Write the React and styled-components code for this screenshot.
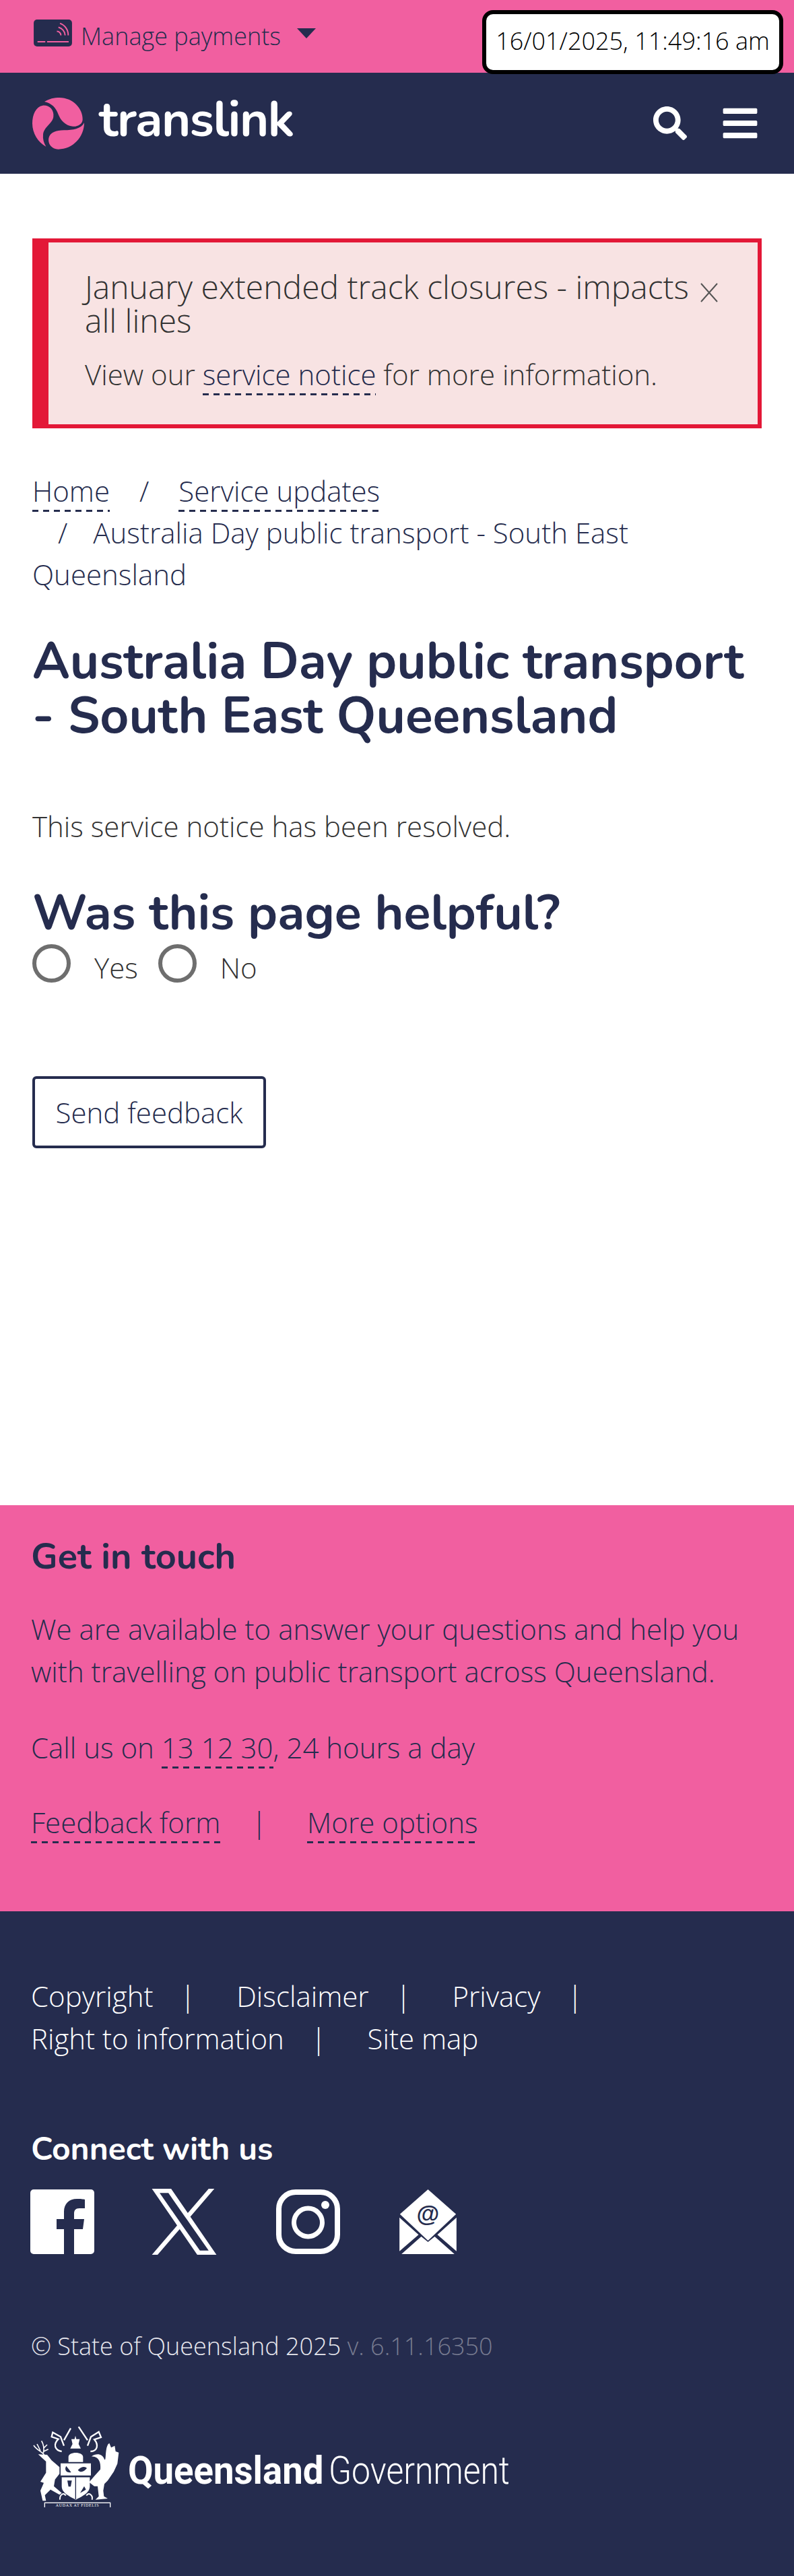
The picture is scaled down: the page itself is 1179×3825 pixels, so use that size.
import React from "react";
import styled, { createGlobalStyle } from "styled-components";
import { FaSearch, FaBars } from "react-icons/fa";

const NAVY = "#252c4e";
const PINK = "#f15fa0";

const Global = createGlobalStyle`
    body {
        margin: 0;
        background: #fff;
        font-family: "Open Sans", "Liberation Sans", sans-serif;
        font-weight: 300;
        color: ${NAVY};
    }
    * { box-sizing: border-box; }
`;

const Page = styled.div`
    width: 1179px;
    height: 3825px;
    display: flex;
    flex-direction: column;
    overflow: hidden;
`;

// top strip
const TopBar = styled.div`
    position: relative;
    height: 108px;
    background: ${PINK};
    padding: 29px 0 0 50px;
    display: flex;
    align-items: flex-start;
`;
const PayLabel = styled.span`
    font-size: 36px;
    line-height: 46px;
    margin: 2px 0 0 13px;
`;
const Caret = styled.span`
    width: 0;
    height: 0;
    margin: 13px 0 0 24px;
    border-left: 14px solid transparent;
    border-right: 14px solid transparent;
    border-top: 15px solid ${NAVY};
`;
const Clock = styled.div`
    position: absolute;
    top: 15px;
    right: 16px;
    width: 447px;
    height: 95px;
    background: #fff;
    border: 6px solid #000;
    border-radius: 16px;
    font-size: 36px;
    line-height: 80px;
    color: #000;
    text-align: center;
    z-index: 2;
`;

// nav
const Nav = styled.div`
    height: 150px;
    background: ${NAVY};
    display: flex;
    align-items: center;
    padding: 0 51px 0 48px;
    color: #fff;
`;
const Brand = styled.a`
    font-family: "Nunito", "Noto Sans", sans-serif;
    font-weight: 700;
    font-size: 74px;
    line-height: 80px;
    letter-spacing: -1.5px;
    margin: -10px 0 0 22px;
    color: #fff;
`;
const NavIcons = styled.div`
    margin-left: auto;
    display: flex;
    align-items: center;
    gap: 50px;
    font-size: 50px;
`;

// main
const Main = styled.main`
    height: 1977px;
    padding: 96px 48px 0;
`;
const Alert = styled.div`
    width: 1083px;
    height: 282px;
    background: #f8e3e3;
    border: 6px solid #e31837;
    border-left-width: 24px;
    padding: 41px 0 0 54px;
    color: #333;
`;
const AlertHead = styled.div`
    display: flex;
    align-items: flex-start;
`;
const AlertTitle = styled.h3`
    margin: 0;
    width: 914px;
    font-weight: 300;
    font-size: 48px;
    line-height: 50px;
`;
const Close = styled.svg`
    width: 26px;
    height: 29px;
    margin-top: 19px;
`;
const AlertText = styled.p`
    margin: 25px 0 0;
    font-size: 42px;
    line-height: 60px;
`;
// thin 16px dash period, what a 1px dashed border gives on a 3x screen
const DashLink = styled.a`
    color: ${NAVY};
    padding-bottom: 3px;
    background: repeating-linear-gradient(90deg, ${NAVY} 0 9px, transparent 9px 16px) left bottom / 100% 3px no-repeat;
`;
const Crumbs = styled.nav`
    margin-top: 62px;
    font-size: 42px;
    line-height: 62px;
`;
const Slash = styled.span`
    padding: 0 ${(p) => p.$gap || 38}px;
`;
const Heading = styled.h1`
    margin: 58px 0 0;
    font-family: "Nunito", "Noto Sans", sans-serif;
    font-weight: 700;
    font-size: 75px;
    line-height: 81px;
`;
const Resolved = styled.p`
    margin: 91px 0 0;
    font-size: 42px;
    line-height: 63px;
    color: #333;
`;
const Question = styled.h2`
    margin: 58px 0 0;
    font-family: "Nunito", "Noto Sans", sans-serif;
    font-weight: 700;
    font-size: 73.5px;
    line-height: 81px;
`;
const Radios = styled.div`
    display: flex;
    margin-top: 5px;
    height: 70px;
`;
const Radio = styled.span`
    width: 57px;
    height: 57px;
    border: 6px solid #6e6e6e;
    border-radius: 50%;
    margin-right: 35px;
`;
const RadioLabel = styled.label`
    font-size: 42px;
    line-height: 70px;
    margin-right: 30px;
    color: #333;
`;
const Button = styled.button`
    display: block;
    margin-top: 126px;
    width: 347px;
    height: 107px;
    background: #fff;
    border: 4px solid ${NAVY};
    border-radius: 6px;
    color: ${NAVY};
    font-family: inherit;
    font-weight: 300;
    font-size: 42px;
    padding: 0;
`;

// pink contact panel
const Contact = styled.section`
    height: 603px;
    background: ${PINK};
    padding: 46px 46px 0;
    font-size: 42px;
    line-height: 63px;
`;
const ContactTitle = styled.h3`
    margin: 0;
    font-family: "Nunito", "Noto Sans", sans-serif;
    font-weight: 700;
    font-size: 54px;
    line-height: 60px;
`;
const ContactText = styled.p`
    margin: ${(p) => p.$top}px 0 0;
`;
const Bar = styled.span`
    padding: 0 ${(p) => p.$right}px 0 ${(p) => p.$left}px;
`;

// navy footer
const Foot = styled.footer`
    flex: 1;
    background: ${NAVY};
    color: #fff;
    padding: 94px 46px 0;
`;
const FootLinks = styled.div`
    font-size: 42px;
    line-height: 63px;
    height: 126px;
`;
const ConnectTitle = styled.h4`
    margin: 103px 0 0;
    font-family: "Nunito", "Noto Sans", sans-serif;
    font-weight: 700;
    font-size: 48px;
    line-height: 60px;
`;
const Socials = styled.div`
    display: flex;
    align-items: flex-start;
    gap: 88px;
    margin-top: 30px;
    height: 98px;
`;
const Social = styled.svg`
    display: block;
    height: ${(p) => p.$h || 96}px;
    margin-left: ${(p) => p.$shift || 0}px;
    margin-top: ${(p) => p.$rise || 0}px;
    fill: #fff;
`;
const Legal = styled.p`
    margin: 105px 0 0;
    font-size: 36px;
    line-height: 60px;
    color: #e8e8ee;
`;
const Version = styled.span`
    color: #777b90;
`;
const GovRow = styled.div`
    display: flex;
    align-items: flex-start;
    margin: 87px 0 0 2px;
`;
const GovName = styled.div`
    display: flex;
    margin: 32px 0 0 10px;
    font-family: "Roboto", "Liberation Sans", sans-serif;
    font-size: 58px;
    line-height: 70px;
    white-space: nowrap;
`;
// the wordmark is a condensed face, squeeze the nearest installed one
const GovWord = styled.span`
    display: inline-block;
    width: ${(p) => p.$w}px;
    margin-right: ${(p) => p.$gap || 0}px;
    font-weight: ${(p) => p.$weight};
    transform: scaleX(${(p) => p.$squeeze});
    transform-origin: left center;
`;

function Logo() {
    return (
        <svg width="77" height="77" viewBox="24 20 231 231" fill={PINK}>
            <path d="M85 238C50 220 24 180 24 135C24 95 40 60 70 55C100 52 122 75 118 105C115 135 75 150 72 185C70 205 75 222 85 238Z" />
            <path d="M78 38C100 25 120 20 145 20C205 20 250 70 248 118C247 138 225 150 205 148C170 145 150 120 140 95C130 65 110 45 78 38Z" />
            <path d="M255 132C255 195 205 250 140 250C110 250 92 225 97 200C103 175 130 165 165 165C205 165 240 160 255 132Z" />
        </svg>
    );
}

function CardIcon() {
    return (
        <svg width="57" height="40" viewBox="30 27 172 121">
            <rect x="30" y="27" width="172" height="121" rx="15" fill={NAVY} />
            <g fill="none" stroke={PINK} strokeWidth="6">
                <path d="M47 127H82M90 127H187" />
                <path d="M134 80a18 18 0 0 1 18 18M141 62a38 38 0 0 1 30 36M148 44a56 56 0 0 1 37 54" />
            </g>
        </svg>
    );
}

function Crest() {
    return (
        <svg width="132" height="122" viewBox="12 8 390 366" fill="#fff" stroke="none">
            {/* stag */}
            <path d="M35 138L75 140L95 165L130 195L130 225L110 250L105 280L140 310L130 318L90 295L65 320L70 345L55 345L45 300L60 265L45 260L70 220L70 170Z" />
            <path d="M62 140C50 125 30 120 15 98M45 122L30 92M58 132C62 115 60 95 50 78M60 110L75 95M60 125L80 115" fill="none" stroke="#fff" strokeWidth="5" />
            {/* brolga */}
            <path d="M272 148C295 132 320 135 330 160C340 175 330 100 352 88L360 108L376 100L380 125L394 130L388 180L372 215L345 255L330 270L325 300L328 325L345 335L290 340L305 325L300 280L285 280L262 262L285 235L312 205C315 175 305 145 272 148Z" />
            {/* helm and crown */}
            <path d="M170 172V150C170 125 235 125 235 150V172ZM178 112H225L215 92L220 70H205L201 55L197 70H183L188 92Z" />
            <path d="M150 75L180 22M255 75L215 15M140 125C110 120 100 95 125 70L95 60L100 40L135 60L150 100M268 125C300 125 305 95 285 72L315 62L305 38L270 60L255 100" fill="none" stroke="#fff" strokeWidth="7" />
            {/* shield */}
            <path d="M135 178H270V232H135Z" />
            <path d="M160 190C150 205 160 222 182 218L172 205ZM212 208C225 192 245 190 252 200C240 215 225 222 212 208Z" fill={NAVY} />
            <path d="M140 240H265V280C265 310 230 325 203 340C175 325 140 310 140 280Z" />
            <path d="M140 238H265M202 238V338" stroke={NAVY} strokeWidth="4" />
            <path d="M165 255H185L180 282H170ZM222 310L240 280L248 295Z" fill={NAVY} />
            <path d="M132 340C130 318 150 305 158 322M275 340C280 318 258 305 250 322" fill="none" stroke="#fff" strokeWidth="6" />
            {/* motto */}
            <rect x="64" y="354" width="292" height="22" fill={NAVY} stroke="#fff" strokeWidth="4" />
            <text x="210" y="371" fontSize="18" textAnchor="middle" fontFamily="Liberation Serif, serif" letterSpacing="2">AUDAX AT FIDELIS</text>
        </svg>
    );
}

export default function App() {
    return (
        <Page>
            <Global />
            <TopBar>
                <CardIcon />
                <PayLabel>Manage payments</PayLabel>
                <Caret />
                <Clock>16/01/2025, 11:49:16 am</Clock>
            </TopBar>
            <Nav>
                <Logo />
                <Brand>translink</Brand>
                <NavIcons>
                    <FaSearch />
                    <FaBars size={58} />
                </NavIcons>
            </Nav>
            <Main>
                <Alert>
                    <AlertHead>
                        <AlertTitle>January extended track closures - impacts all lines</AlertTitle>
                        <Close viewBox="0 0 26 29" fill="none" stroke="#555" strokeWidth="2">
                            <path d="M1 1L25 28M25 1L1 28" />
                        </Close>
                    </AlertHead>
                    <AlertText>View our <DashLink>service notice</DashLink> for more information.</AlertText>
                </Alert>
                <Crumbs>
                    <DashLink>Home</DashLink><Slash $gap={44}>/</Slash><DashLink>Service updates</DashLink>
                    <br />
                    <Slash>/</Slash>Australia Day public transport - South East
                    <br />
                    Queensland
                </Crumbs>
                <Heading>Australia Day public transport - South East Queensland</Heading>
                <Resolved>This service notice has been resolved.</Resolved>
                <Question>Was this page helpful?</Question>
                <Radios>
                    <Radio />
                    <RadioLabel>Yes</RadioLabel>
                    <Radio />
                    <RadioLabel>No</RadioLabel>
                </Radios>
                <Button>Send feedback</Button>
            </Main>
            <Contact>
                <ContactTitle>Get in touch</ContactTitle>
                <ContactText $top={46}>We are available to answer your questions and help you with travelling on public transport across Queensland.</ContactText>
                <ContactText $top={50}>Call us on <DashLink>13 12 30</DashLink>, 24 hours a day</ContactText>
                <ContactText $top={48}>
                    <DashLink>Feedback form</DashLink><Bar $left={46} $right={60}>|</Bar><DashLink>More options</DashLink>
                </ContactText>
            </Contact>
            <Foot>
                <FootLinks>
                    Copyright<Bar $left={40} $right={61}>|</Bar>Disclaimer<Bar $left={40} $right={61}>|</Bar>Privacy<Bar $left={40} $right={61}>|</Bar>
                    <br />
                    Right to information<Bar $left={40} $right={61}>|</Bar>Site map
                </FootLinks>
                <ConnectTitle>Connect with us</ConnectTitle>
                <Socials>
                    <Social viewBox="0 0 95 96" width="95" $shift={-1}>
                        <path fillRule="evenodd" d="M5 0H90A5 5 0 0 1 95 5V91A5 5 0 0 1 90 96H65V59H78L80 44H65V36C65 31 67 28 73 28H81V15C79 14.5 74 14 69 14C58 14 50 21 50 33V44H39V59H50V96H5A5 5 0 0 1 0 91V5A5 5 0 0 1 5 0Z" />
                    </Social>
                    <Social viewBox="0 0 1200 1227" width="97" $h={98} $shift={-3} $rise={-1}>
                        <path d="M714.163 519.284L1160.89 0H1055.03L667.137 450.887L357.328 0H0L468.492 681.821L0 1226.37H105.866L515.491 750.218L842.672 1226.37H1200L714.137 519.284H714.163ZM569.165 687.828L521.697 619.934L144.011 79.6944H306.615L611.412 515.685L658.88 583.579L1055.08 1150.3H892.476L569.165 687.854V687.828Z" />
                    </Social>
                    <Social viewBox="0 0 95 96" width="95">
                        <rect x="4" y="4" width="87" height="88" rx="25" fill="none" stroke="#fff" strokeWidth="8" />
                        <circle cx="47.5" cy="49" r="21" fill="none" stroke="#fff" strokeWidth="7" />
                        <circle cx="73" cy="23" r="6" />
                    </Social>
                    <Social viewBox="43 30 254 288" width="85">
                        <path d="M170 30L295 140L170 258L45 140Z" />
                        <path d="M43 155L128 232L43 305ZM297 155L212 232L297 305ZM52 318L140 240L170 264L200 240L288 318Z" />
                        <text x="170" y="175" fontSize="104" textAnchor="middle" fill={NAVY} fontFamily="Liberation Sans, sans-serif" fontWeight="700">@</text>
                    </Social>
                </Socials>
                <Legal>© State of Queensland 2025 <Version>v. 6.11.16350</Version></Legal>
                <GovRow>
                    <Crest />
                    <GovName>
                        <GovWord $w={280} $gap={18} $weight={700} $squeeze={0.94}>Queensland</GovWord>
                        <GovWord $w={267} $weight={300} $squeeze={0.86}>Government</GovWord>
                    </GovName>
                </GovRow>
            </Foot>
        </Page>
    );
}
